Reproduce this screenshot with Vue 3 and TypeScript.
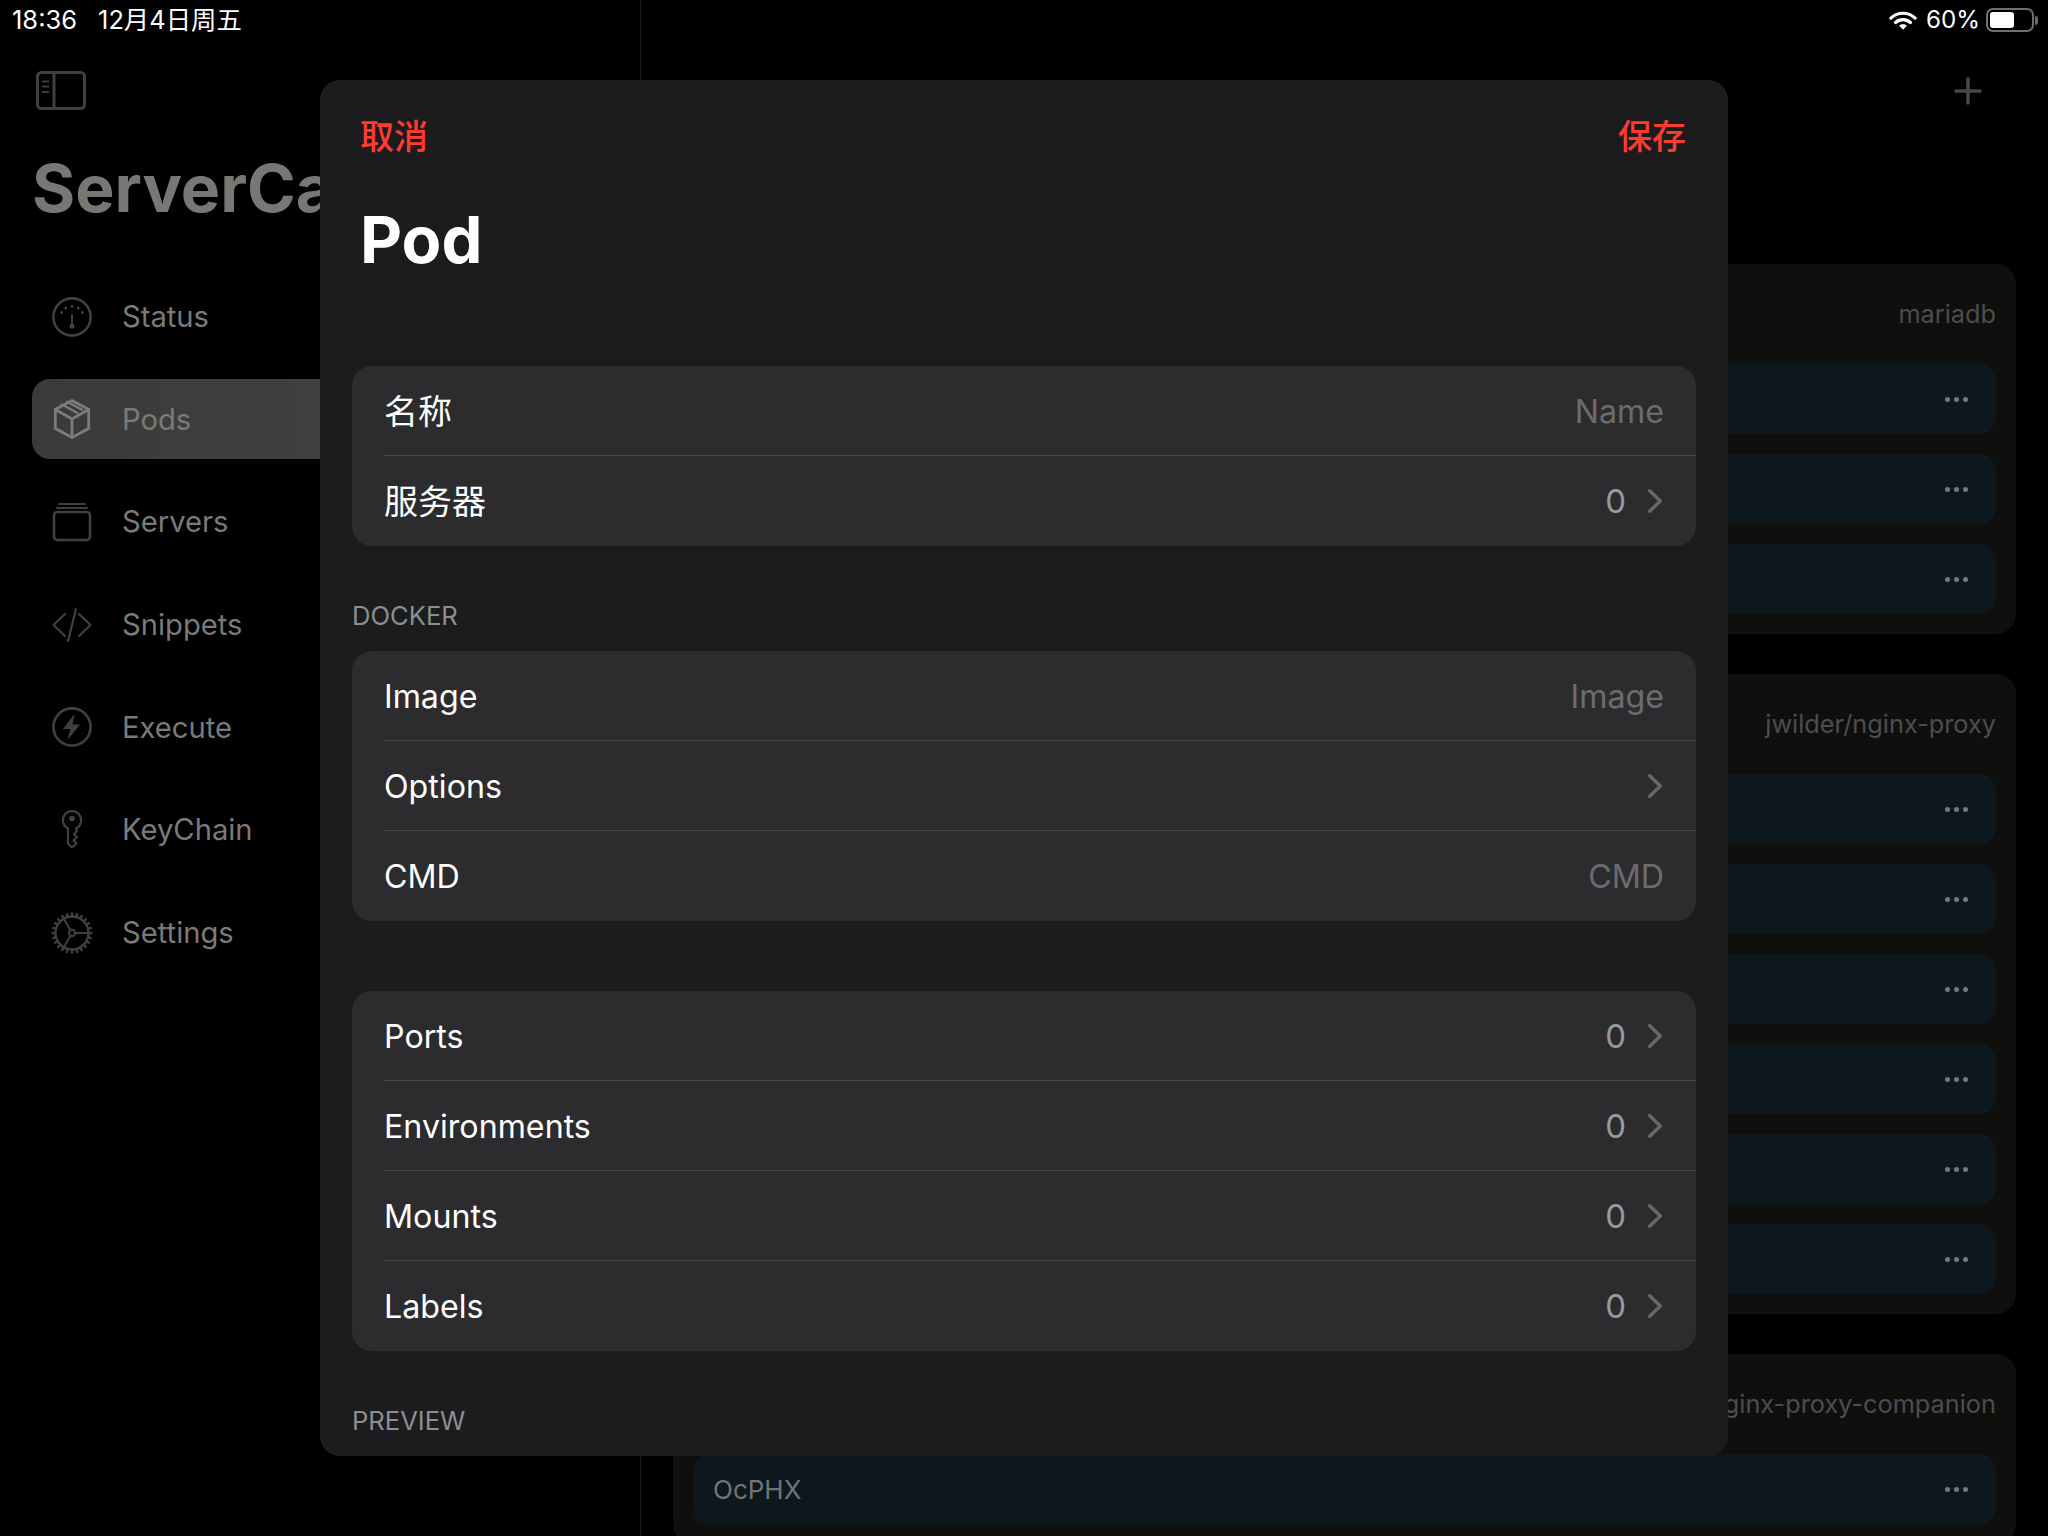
<script setup lang="ts">
interface NavItem { label: string; icon: string; active?: boolean }
interface Row { label: string; placeholder?: string; value?: string; chevron?: boolean; cjk?: boolean }
interface Group { header?: string; spacer?: boolean; rows: Row[] }
interface Card { title: string; rows: string[] }

const nav: NavItem[] = [
  { label: 'Status', icon: 'status' },
  { label: 'Pods', icon: 'pods', active: true },
  { label: 'Servers', icon: 'servers' },
  { label: 'Snippets', icon: 'snippets' },
  { label: 'Execute', icon: 'execute' },
  { label: 'KeyChain', icon: 'key' },
  { label: 'Settings', icon: 'settings' },
]

const groups: Group[] = [
  { rows: [
    { label: '名称', placeholder: 'Name', cjk: true },
    { label: '服务器', value: '0', chevron: true, cjk: true },
  ] },
  { header: 'DOCKER', rows: [
    { label: 'Image', placeholder: 'Image' },
    { label: 'Options', chevron: true },
    { label: 'CMD', placeholder: 'CMD' },
  ] },
  { spacer: true, rows: [
    { label: 'Ports', value: '0', chevron: true },
    { label: 'Environments', value: '0', chevron: true },
    { label: 'Mounts', value: '0', chevron: true },
    { label: 'Labels', value: '0', chevron: true },
  ] },
]

const cards: Card[] = [
  { title: 'mariadb', rows: ['', '', ''] },
  { title: 'jwilder/nginx-proxy', rows: ['', '', '', '', '', ''] },
  { title: 'jrcs/letsencrypt-nginx-proxy-companion', rows: ['OcPHX'] },
]

const teeth = Array.from({ length: 24 }, (_, i) => i * 15)
</script>

<template>
  <div class="screen">
    <div class="status-bar">
      <div class="status-left">
        <span>18:36</span>
        <span class="date">12月4日周五</span>
      </div>
      <div class="status-right">
        <svg class="wifi" width="28" height="21" viewBox="0 0 30 22">
          <path d="M2 8.500C9.500 1.500 20.500 1.500 28 8.500" fill="none" stroke="#fff" stroke-width="3.400" stroke-linecap="round" />
          <path d="M7 13.200C11.800 9 18.200 9 23 13.200" fill="none" stroke="#fff" stroke-width="3.400" stroke-linecap="round" />
          <path d="M15 21L10.800 16.600C13.200 14.600 16.800 14.600 19.200 16.600Z" fill="#fff" />
        </svg>
        <span>60%</span>
        <div class="battery"><div class="battery-fill"></div></div>
        <div class="battery-cap"></div>
      </div>
    </div>

    <aside class="sidebar">
      <svg class="toggle" width="50" height="40" viewBox="0 0 50 40" fill="none" stroke="#3f3f3f" stroke-width="3">
        <rect x="1.500" y="1.500" width="47" height="36" rx="4" />
        <path d="M18 1.500V37.500" />
        <path d="M6 10.500H13M6 15.500H13M6 21H13" stroke-width="2" />
      </svg>
      <h1 class="app-title">ServerCat</h1>
      <nav class="nav">
        <div v-for="item in nav" :key="item.label" class="nav-item" :class="{ active: item.active }">
          <svg class="nav-icon" width="44" height="44" viewBox="0 0 44 44" fill="none" stroke="currentColor" stroke-width="2.600" stroke-linecap="round" stroke-linejoin="round">
            <template v-if="item.icon === 'status'">
              <circle cx="22" cy="22" r="18.600" />
              <path d="M22 20V31" stroke-width="2" />
              <circle cx="22" cy="31" r="2.600" fill="currentColor" stroke="none" />
              <path d="M22 11.500V11.600M15.800 13V13.100M28.200 13V13.100M11.500 17.400V17.500M32.500 17.400V17.500" stroke-width="3" />
            </template>
            <template v-else-if="item.icon === 'pods'">
              <path d="M22 3.500L38.700 12.500V31.500L22 40.500L5.300 31.500V12.500Z" stroke-width="2.800" />
              <path d="M5.300 12.500L22 22L38.700 12.500M22 22V40.500" stroke-width="2.800" />
              <path d="M12 7.500L27 15.800M17 4.800L32 12.800" stroke-width="2.400" />
            </template>
            <template v-else-if="item.icon === 'servers'">
              <rect x="4" y="12" width="36" height="28" rx="3.500" />
              <path d="M9 4H35" stroke-width="2" />
              <path d="M7 8H37" stroke-width="2" />
            </template>
            <template v-else-if="item.icon === 'snippets'">
              <path d="M15 11L3.500 22L15 33M29 11L40.500 22L29 33M26 6L18 38" stroke-width="2.200" />
            </template>
            <template v-else-if="item.icon === 'execute'">
              <circle cx="22" cy="22" r="18.600" />
              <path d="M24.500 9L13 24H20.500L17.500 35L30 19.500H22.500Z" fill="currentColor" stroke="none" />
            </template>
            <template v-else-if="item.icon === 'key'">
              <path d="M18 20.600V35.500L22 39.500L26.500 35.500L23.500 32.500L27 29L24 26L27 23L26 20.600A9.200 9.200 0 1 0 18 20.600Z" stroke-width="2.200" />
              <circle cx="22" cy="10.500" r="2.800" fill="currentColor" stroke="none" />
            </template>
            <template v-else>
              <circle cx="22" cy="22" r="16.500" stroke-width="2.400" />
              <circle cx="22" cy="22" r="3.200" stroke-width="2" />
              <path d="M25 22H38M20.500 19.400L14 8M20.500 24.600L14 36" stroke-width="2" />
              <path v-for="t in teeth" :key="t" d="M22 5V2.500" stroke-width="2.400" :transform="`rotate(${t} 22 22)`" />
            </template>
          </svg>
          <span class="nav-label">{{ item.label }}</span>
        </div>
      </nav>
    </aside>

    <div class="divider"></div>

    <main class="content">
      <svg class="plus" width="28" height="28" viewBox="0 0 28 28" stroke="#474747" stroke-width="3.600" stroke-linecap="round">
        <path d="M14 2V26M2 14H26" />
      </svg>
      <section v-for="card in cards" :key="card.title" class="card">
        <div class="card-title">{{ card.title }}</div>
        <div class="card-rows">
          <div v-for="(row, i) in card.rows" :key="i" class="card-row">
            <span>{{ row }}</span>
            <div class="dots"><i></i><i></i><i></i></div>
          </div>
        </div>
      </section>
    </main>

    <div class="modal">
      <header class="modal-head">
        <span class="action">取消</span>
        <span class="action">保存</span>
      </header>
      <h2 class="modal-title">Pod</h2>
      <div class="form">
        <template v-for="(group, g) in groups" :key="g">
          <div v-if="group.header" class="section-label">{{ group.header }}</div>
          <div v-if="group.spacer" class="spacer"></div>
          <div class="group">
            <div v-for="row in group.rows" :key="row.label" class="row">
              <span class="row-label" :class="{ cjk: row.cjk }">{{ row.label }}</span>
              <span v-if="row.placeholder" class="placeholder">{{ row.placeholder }}</span>
              <span v-if="row.value" class="value">{{ row.value }}</span>
              <svg v-if="row.chevron" class="chevron" width="14" height="24" viewBox="0 0 14 24" fill="none" stroke="#68686c" stroke-width="3.400" stroke-linecap="round" stroke-linejoin="round">
                <path d="M1.700 1.700L12.300 12L1.700 22.300" />
              </svg>
            </div>
          </div>
        </template>
        <div class="section-label">PREVIEW</div>
      </div>
    </div>
  </div>
</template>

<style>
html, body { margin: 0; background: #000; }
</style>

<style scoped>
.screen {
  position: relative;
  width: 2048px;
  height: 1536px;
  overflow: hidden;
  background: #000;
  display: flex;
  font-family: Inter, "Noto Sans CJK SC", sans-serif;
}
.status-bar {
  position: absolute;
  top: 0;
  left: 0;
  right: 0;
  height: 40px;
  padding: 0 10px 0 12px;
  display: flex;
  justify-content: space-between;
  align-items: center;
  color: #fff;
  font-size: 25.500px;
  line-height: 40px;
}
.status-left { display: flex; gap: 21px; align-items: baseline; }
.date { font-size: 25.400px; }
.status-right { display: flex; align-items: center; font-size: 24.200px; }
.wifi { margin-right: 9px; }
.battery {
  width: 48px;
  height: 24px;
  margin-left: 6px;
  box-sizing: border-box;
  border: 2px solid #6f6f6f;
  border-radius: 7px;
  padding: 2px;
}
.battery-fill { width: 60%; height: 100%; background: #fff; border-radius: 3px; }
.battery-cap {
  width: 3px;
  height: 9px;
  margin-left: 1px;
  background: #6d6d6d;
  border-radius: 0 3px 3px 0;
}
.sidebar {
  width: 640px;
  flex: none;
  box-sizing: border-box;
  padding: 71px 0 0 32px;
  overflow: hidden;
}
.toggle { display: block; margin-left: 4px; }
.app-title {
  margin: 0;
  padding-top: 36.500px;
  font-size: 66px;
  line-height: 80px;
  font-weight: 700;
  color: #767874;
  white-space: nowrap;
}
.nav { display: flex; flex-direction: column; gap: 22.700px; margin-top: 49px; }
.nav-item {
  height: 80px;
  display: flex;
  align-items: center;
  border-radius: 18px;
  padding-left: 18px;
  color: #404040;
}
.nav-item.active {
  background: linear-gradient(90deg, #3a3a3a, #454741);
  color: #7c7c7c;
}
.nav-icon { flex: none; }
.nav-label {
  margin-left: 28px;
  font-size: 29.200px;
  color: #7a7a7a;
}
.divider { width: 1px; flex: none; background: #1b1b1b; }
.content {
  flex: 1;
  min-width: 0;
  position: relative;
  padding: 264px 32px 0 32px;
  display: flex;
  flex-direction: column;
  gap: 40px;
}
.plus { position: absolute; top: 77px; right: 66px; }
.card {
  flex: none;
  background: #0f0f0e;
  border-radius: 20px;
  padding: 0 20px 20px;
}
.card-title {
  height: 100px;
  box-sizing: border-box;
  padding-bottom: 2px;
  display: flex;
  align-items: center;
  justify-content: flex-end;
  font-size: 25.300px;
  color: #4d4d4d;
  white-space: nowrap;
}
.card-rows { display: flex; flex-direction: column; gap: 20px; }
.card-row {
  height: 70px;
  padding: 0 28px 0 20px;
  display: flex;
  align-items: center;
  justify-content: space-between;
  background: #0d171e;
  border-radius: 16px;
  font-size: 26px;
  color: #717573;
}
.dots { display: flex; gap: 4px; }
.dots i { width: 5px; height: 5px; border-radius: 50%; background: #75787b; display: block; }
.modal {
  position: absolute;
  left: 320px;
  top: 80px;
  width: 1408px;
  height: 1376px;
  background: #1c1c1e;
  border-radius: 20px;
  overflow: hidden;
  color: #fff;
  display: flex;
  flex-direction: column;
}
.modal-head {
  display: flex;
  justify-content: space-between;
  padding: 32px 42px 0 40px;
  height: 50px;
}
.action { font-size: 34px; line-height: 50px; color: #ff3b30; font-weight: 500; }
.modal-title {
  margin: 0;
  padding: 38px 0 0 40px;
  font-size: 65px;
  line-height: 80px;
  font-weight: 700;
}
.form { padding: 86px 32px 0; display: flex; flex-direction: column; }
.section-label {
  height: 105px;
  padding-bottom: 20px;
  box-sizing: border-box;
  display: flex;
  align-items: flex-end;
  font-size: 25.600px;
  color: #8d8d92;
}
.spacer { height: 70px; }
.group { background: #2c2c2e; border-radius: 20px; overflow: hidden; }
.row {
  height: 90px;
  padding: 0 34px 0 32px;
  display: flex;
  align-items: center;
  position: relative;
  font-size: 32.200px;
}
.row + .row::before {
  content: "";
  position: absolute;
  left: 32px;
  right: 0;
  top: -1px;
  height: 1px;
  background: #47474a;
}
.row-label { flex: 1; }
.row-label.cjk { font-size: 34px; padding-bottom: 3px; }
.placeholder { color: #6c6c70; margin-right: -2px; }
.value { color: #98989d; font-size: 33px; margin-right: 22px; }
.chevron { flex: none; }
</style>
